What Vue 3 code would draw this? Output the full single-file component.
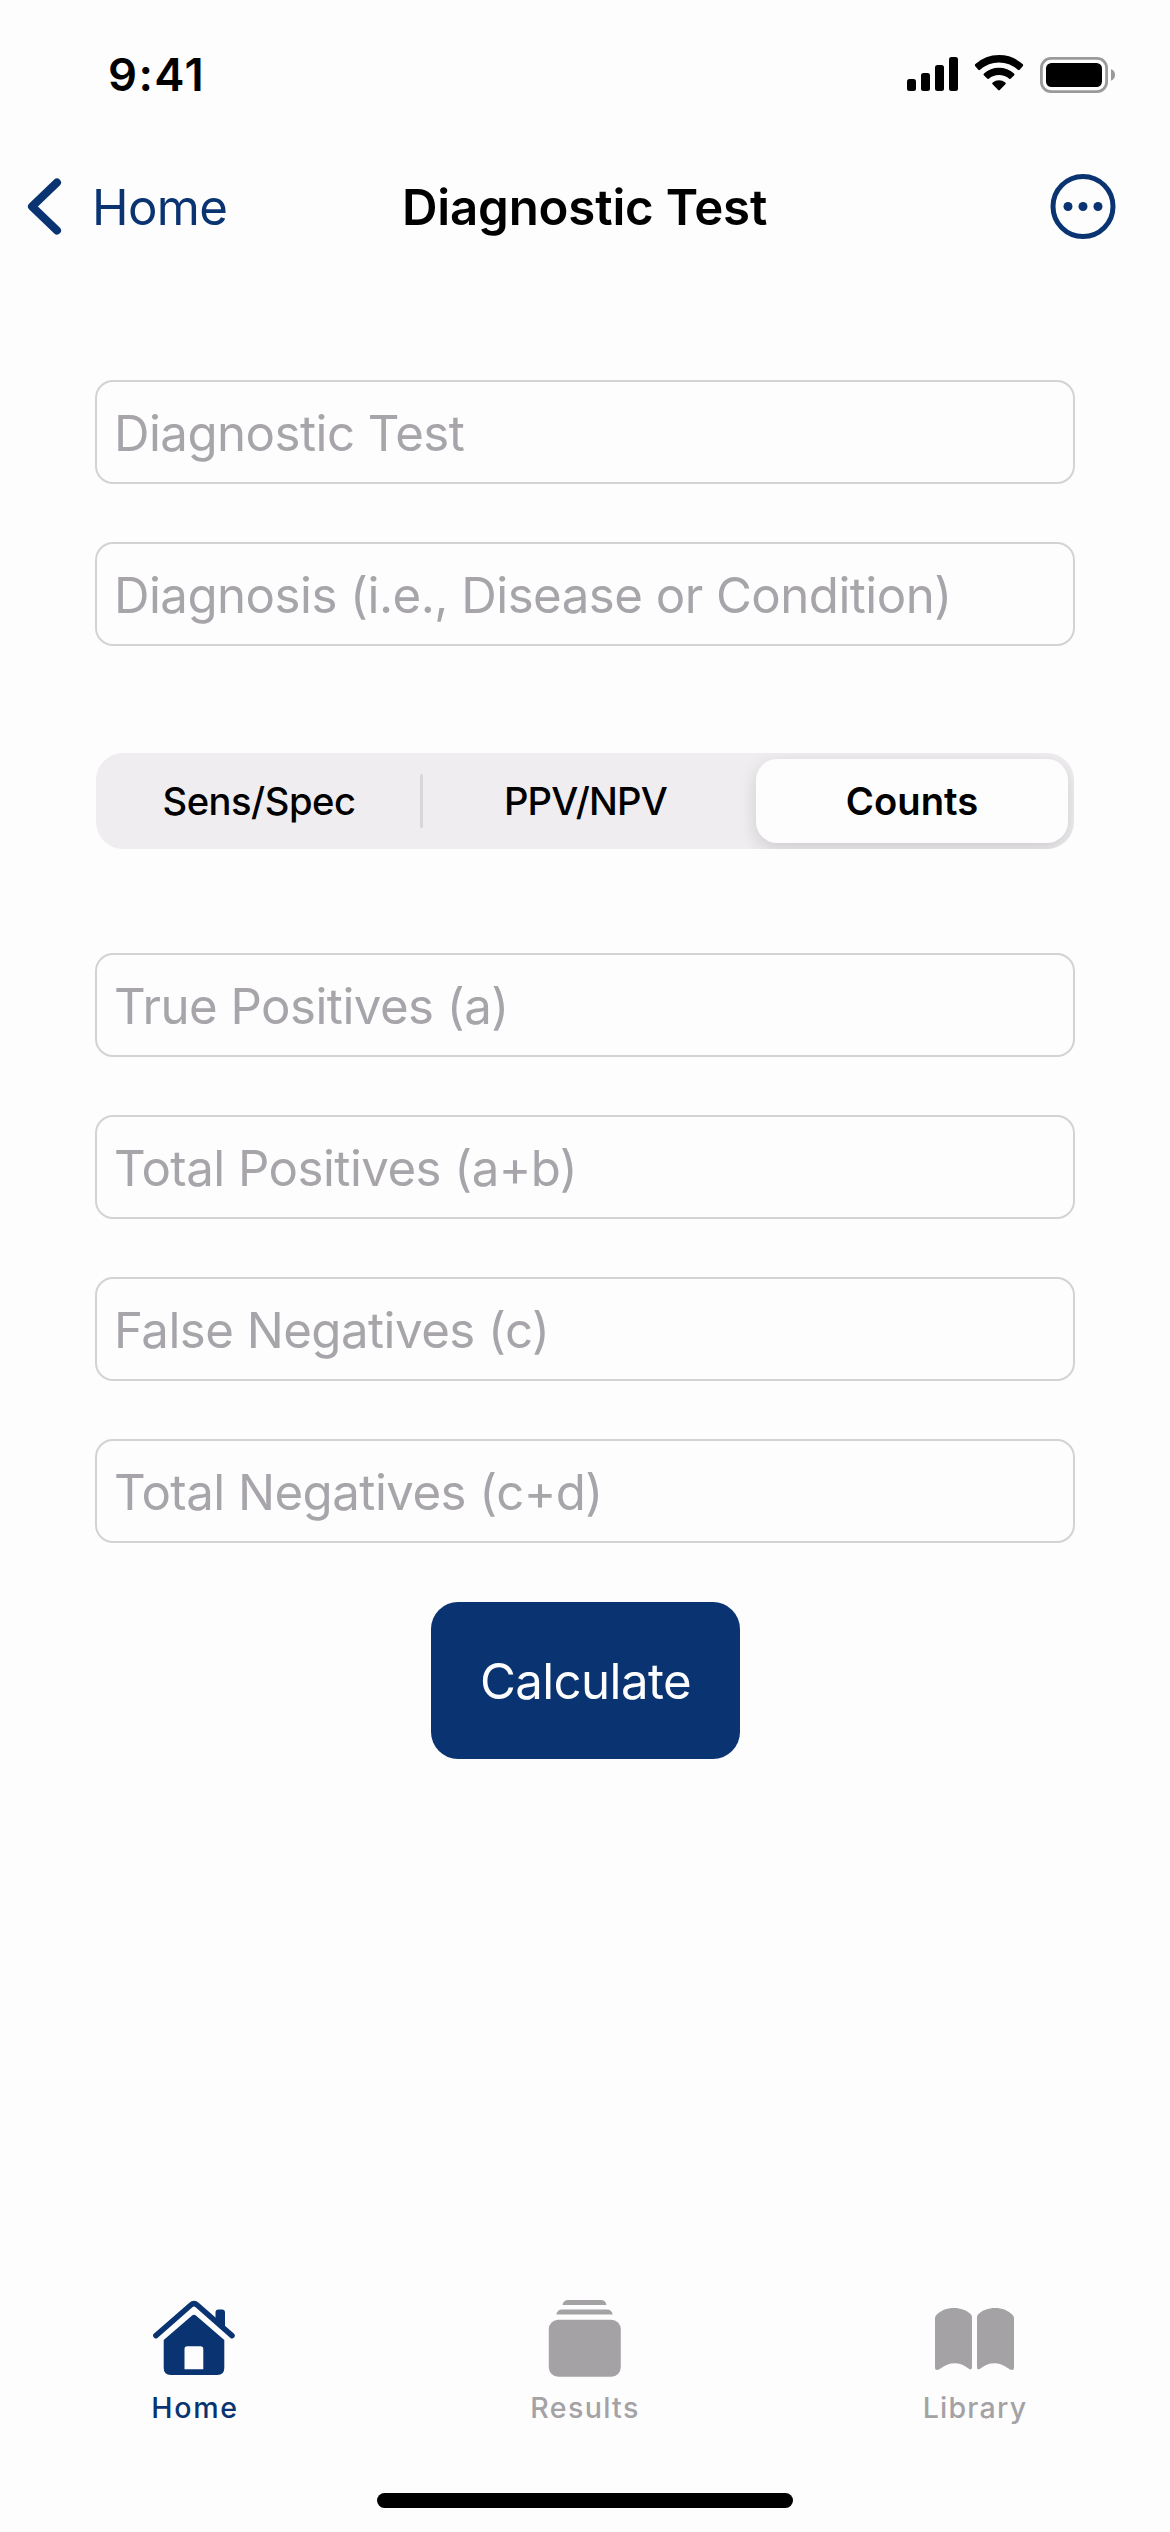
<script setup>
import { ref } from 'vue'

const details = ['Diagnostic Test', 'Diagnosis (i.e., Disease or Condition)']
const segments = ['Sens/Spec', 'PPV/NPV', 'Counts']
const selected = ref(2)
const counts = [
  'True Positives (a)',
  'Total Positives (a+b)',
  'False Negatives (c)',
  'Total Negatives (c+d)',
]
</script>

<template>
  <div class="screen">
    <header class="status">
      <span class="time">9:41</span>
      <svg class="indicators" width="142" height="40" viewBox="0 0 142 40">
        <rect x="0" y="25" width="9" height="12" rx="2.5" />
        <rect x="14" y="19" width="9" height="18" rx="2.5" />
        <rect x="28" y="11" width="9" height="26" rx="2.5" />
        <rect x="42" y="3" width="9" height="34" rx="2.5" />
        <path d="M68.3 12.2Q67.3 11.2 68.4 10.1Q78.500 1.100 92 1.100Q105.500 1.100 115.600 10.100Q116.700 11.200 115.700 12.200L112.700 15.800Q111.900 16.700 110.900 15.800Q102.500 8.500 92 8.500Q81.500 8.500 73.100 15.800Q72.100 16.700 71.300 15.800Z" />
        <path d="M76.800 21.200Q76 20.300 77 19.400Q83.300 13.800 92 13.800Q100.700 13.800 107 19.400Q108 20.300 107.200 21.200L103.900 24.600Q103.100 25.400 102.200 24.700Q97.800 21 92 21Q86.200 21 81.800 24.700Q80.900 25.400 80.100 24.600Z" />
        <path d="M85.600 30.200Q84.600 29.200 85.700 28.400Q88.500 26.300 92 26.300Q95.500 26.300 98.300 28.400Q99.400 29.200 98.400 30.200L92.800 36.100Q92 36.900 91.200 36.100Z" />
      </svg>
      <svg class="battery" width="76" height="36" viewBox="0 0 76 36">
        <rect class="shell" x="1.400" y="1.400" width="65.200" height="33.200" rx="9.500" />
        <rect x="6" y="6" width="56" height="24" rx="5.500" />
        <path class="cap" d="M71 12.300Q75 13.600 75 18Q75 22.400 71 23.700Z" />
      </svg>
    </header>

    <nav class="nav">
      <a class="back">
        <svg width="36" height="60" viewBox="0 0 36 60">
          <path d="M31 5.500L6 29.500L31 53.500" />
        </svg>
        <span>Home</span>
      </a>
      <h1>Diagnostic Test</h1>
      <svg class="more" width="66" height="66" viewBox="0 0 66 66">
        <circle class="ring" cx="33" cy="32.500" r="30" />
        <circle cx="18" cy="32.500" r="4.500" />
        <circle cx="33" cy="32.500" r="4.500" />
        <circle cx="48" cy="32.500" r="4.500" />
      </svg>
    </nav>

    <main class="form">
      <div class="fields">
        <div v-for="label in details" :key="label" class="field">{{ label }}</div>
      </div>

      <div class="segmented">
        <div
          v-for="(name, i) in segments"
          :key="name"
          class="segment"
          :class="{ active: i === selected, divided: i === 0 }"
          @click="selected = i"
        >
          <span :class="{ tight: i === 1 }">{{ name }}</span>
        </div>
      </div>

      <div class="fields">
        <div v-for="label in counts" :key="label" class="field">{{ label }}</div>
      </div>

      <button class="calculate">Calculate</button>
    </main>

    <footer class="tabs">
      <div class="tab current">
        <svg width="84" height="80" viewBox="0 0 84 80">
          <path class="roof" d="M2.900 37.600L37.600 7.200Q41 4.200 44.400 7.200L79 37.600" />
          <path d="M62.500 24V14.500Q62.500 11.500 65.500 11.500H69Q72 11.500 72 14.500V32Z" />
          <path fill-rule="evenodd" d="M38.800 17.800Q41 15.900 43.200 17.800L71.300 42V70Q71.300 77 64.300 77H17.700Q10.700 77 10.700 70V42ZM34.300 48.300Q31.500 48.300 31.500 51.100V71.300H50.300V51.100Q50.300 48.300 47.500 48.300Z" />
        </svg>
        <span class="home-label">Home</span>
      </div>
      <div class="tab">
        <svg width="84" height="80" viewBox="0 0 84 80">
          <path d="M19.500 7Q20.500 2 25 2H58Q62.500 2 63.500 7Z" />
          <path d="M13.300 16.600Q14.500 11.600 19 11.600H64Q68.500 11.600 69.700 16.600Z" />
          <rect x="5.800" y="21.800" width="72" height="57" rx="9.500" />
        </svg>
        <span class="results-label">Results</span>
      </div>
      <div class="tab">
        <svg width="84" height="80" viewBox="0 0 84 80">
          <path d="M2 20Q2 18.600 3 17.500C11 7.600 30 7.600 38 16.600Q39 17.700 39 19V69Q39 73 35.500 70.500C26.500 63.500 17 63.500 7.500 70.500Q2 74 2 69.500Z" />
          <path d="M81 20Q81 18.600 80 17.500C72 7.600 53 7.600 45 16.600Q44 17.700 44 19V69Q44 73 47.500 70.500C56.500 63.500 66 63.500 75.500 70.500Q81 74 81 69.500Z" />
        </svg>
        <span class="library-label">Library</span>
      </div>
    </footer>
    <div class="home-indicator"></div>
  </div>
</template>

<style>
body {
  margin: 0;
  background: #fdfdfd;
}
</style>

<style scoped>
.screen {
  box-sizing: border-box;
  width: 1170px;
  height: 2532px;
  display: flex;
  flex-direction: column;
  overflow: hidden;
  background: #fdfdfd;
  color: #000;
  font-family: Inter, "Liberation Sans", sans-serif;
}
svg {
  display: block;
  flex: none;
}

.status {
  height: 149px;
  flex: none;
  box-sizing: border-box;
  padding: 0 54px 0 108px;
  display: flex;
  align-items: center;
}
.time {
  flex: 1;
  font-size: 45.4px;
  font-weight: 600;
  letter-spacing: 1.4px;
}
.battery {
  margin-left: -9px;
}
.indicators {
  margin-top: -1px;
}
.shell {
  fill: none;
  stroke: #9b999c;
  stroke-width: 2.8;
}
.cap {
  fill: #9b999c;
}

.nav {
  height: 116px;
  flex: none;
  box-sizing: border-box;
  padding: 0 54px 0 26px;
  display: grid;
  grid-template-columns: 376px 1fr 66px;
  align-items: center;
}
.back {
  display: flex;
  align-items: center;
  color: #0a3471;
  font-size: 49.2px;
  letter-spacing: -0.6px;
}
.back svg {
  margin-right: 30px;
}
.back path {
  fill: none;
  stroke: #0a3471;
  stroke-width: 8;
  stroke-linecap: round;
  stroke-linejoin: round;
}
h1 {
  margin: 0;
  font-size: 49.2px;
  font-weight: 600;
  letter-spacing: -0.18px;
  white-space: nowrap;
}
.more {
  fill: #0a3471;
}
.ring {
  fill: none;
  stroke: #0a3471;
  stroke-width: 5;
}

.form {
  padding: 115px 95px 0;
  display: flex;
  flex-direction: column;
}
.fields {
  display: flex;
  flex-direction: column;
  gap: 58px;
}
.field {
  box-sizing: border-box;
  height: 104px;
  padding: 2px 0 0 17px;
  border: 2px solid #d3d2d5;
  border-radius: 18px;
  display: flex;
  align-items: center;
  color: #a7a5aa;
  font-size: 49.2px;
  letter-spacing: -0.53px;
  white-space: nowrap;
}

.segmented {
  box-sizing: border-box;
  height: 96px;
  margin: 107px 1px 104px;
  padding: 6px;
  display: flex;
  border-radius: 27px;
  overflow: hidden;
  background: #efedf0;
}
.segment {
  position: relative;
  width: 327px;
  display: flex;
  align-items: center;
  justify-content: center;
  font-size: 38.2px;
  font-weight: 450;
  letter-spacing: -0.5px;
}
.segment:first-child {
  box-sizing: border-box;
  width: 320px;
  padding-right: 6px;
}
.segment.active {
  width: 312px;
  margin-left: 7px;
  border-radius: 21px;
  background: #fdfdfd;
  box-shadow: 0 6px 18px rgba(0, 0, 0, 0.14);
  font-weight: 600;
  letter-spacing: 0;
}
.segment.divided::after {
  content: "";
  position: absolute;
  right: -1px;
  top: 15px;
  width: 3px;
  height: 54px;
  border-radius: 1.5px;
  background: #d7d6d9;
}
.tight {
  letter-spacing: -0.8px;
}

.calculate {
  align-self: center;
  width: 309px;
  height: 157px;
  margin: 59px 0 0 1px;
  padding: 0;
  border: 0;
  border-radius: 27px;
  background: #0a3471;
  color: #fdfdfd;
  font-family: inherit;
  font-size: 49.2px;
  letter-spacing: -0.6px;
}

.tabs {
  margin-top: auto;
  display: flex;
}
.tab {
  flex: 1;
  display: flex;
  flex-direction: column;
  align-items: center;
  color: #a4a2a5;
  fill: #a4a2a5;
  font-size: 28.6px;
  font-weight: 500;
  line-height: 40px;
}
.tab span {
  margin-top: 10px;
}
.current {
  color: #0a3471;
  fill: #0a3471;
}
.roof {
  fill: none;
  stroke: #0a3471;
  stroke-width: 5.500;
  stroke-linecap: round;
}
.home-label {
  letter-spacing: 1.67px;
}
.results-label {
  letter-spacing: 1.33px;
}
.library-label {
  letter-spacing: 1.2px;
}
.home-indicator {
  flex: none;
  width: 416px;
  height: 15px;
  margin: 65px auto 24px;
  border-radius: 8px;
  background: #000;
}
</style>
